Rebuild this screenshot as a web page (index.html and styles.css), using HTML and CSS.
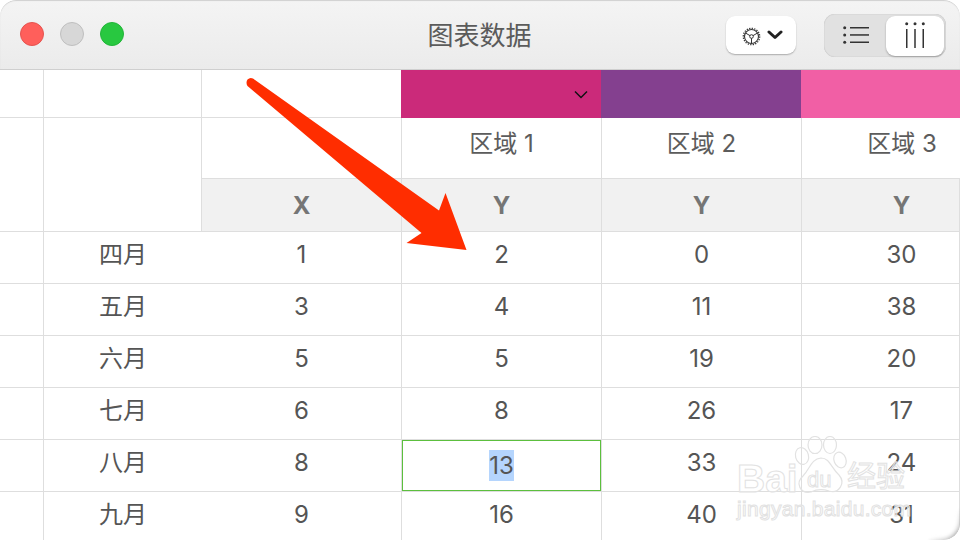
FILE: index.html
```html
<!DOCTYPE html>
<html lang="zh">
<head>
<meta charset="utf-8">
<title>图表数据</title>
<link rel="stylesheet" href="styles.css">
</head>
<body>
<div class="window">
  <header class="titlebar">
    <div class="lights">
      <span class="light red"></span>
      <span class="light grey"></span>
      <span class="light green"></span>
    </div>
    <div class="title">图表数据</div>
    <div class="tools">
      <button class="gear-btn">
        <svg class="gear" width="19" height="19" viewBox="0 0 19 19" fill="none" stroke="#333">
          <circle cx="9.500" cy="9.500" r="7" stroke-width="1.100"/>
          <circle cx="9.500" cy="9.500" r="8.200" stroke-dasharray="1.300 1.270" stroke-width="1.300"/>
          <path d="M9.500 9.500 L3.500 6 M9.500 9.500 L15.500 6 M9.500 9.500 V16.500" stroke-width="1"/>
          <circle cx="9.500" cy="9.500" r="1.800" fill="#fff" stroke-width="1"/>
        </svg>
        <svg width="16" height="10" viewBox="0 0 16 10" fill="none" stroke="#222" stroke-width="3" stroke-linecap="round" stroke-linejoin="round">
          <path d="M2 2 L8 7.500 L14 2"/>
        </svg>
      </button>
      <div class="segment">
        <span class="seg">
          <svg width="26" height="18" viewBox="0 0 26 18" fill="#333">
            <circle cx="1.700" cy="1.700" r="1.500"/><circle cx="1.700" cy="9" r="1.500"/><circle cx="1.700" cy="16.300" r="1.500"/>
            <rect x="7" y="1" width="19" height="1.500"/><rect x="7" y="8.200" width="19" height="1.500"/><rect x="7" y="15.500" width="19" height="1.500"/>
          </svg>
        </span>
        <span class="seg active">
          <svg width="20" height="26" viewBox="0 0 20 26" fill="#333">
            <circle cx="1.700" cy="1.700" r="1.500"/><circle cx="10" cy="1.700" r="1.500"/><circle cx="18.300" cy="1.700" r="1.500"/>
            <rect x="1" y="7" width="1.500" height="19"/><rect x="9.250" y="7" width="1.500" height="19"/><rect x="17.500" y="7" width="1.500" height="19"/>
          </svg>
        </span>
      </div>
    </div>
  </header>
  <div class="sheet">
    <div class="cell"></div>
    <div class="cell"></div>
    <div class="cell"></div>
    <div class="cell swatch magenta">
      <svg class="caret" width="14" height="9" viewBox="0 0 14 9" fill="none" stroke="#111" stroke-width="1.500"><path d="M1 1.500 L7 7.500 L13 1.500"/></svg>
    </div>
    <div class="cell swatch purple"></div>
    <div class="cell swatch pink"></div>

    <div class="cell span2"></div>
    <div class="cell span2"></div>
    <div class="cell head">&nbsp;</div>
    <div class="cell head">区域 1</div>
    <div class="cell head">区域 2</div>
    <div class="cell head shift">区域 3</div>

    <div class="cell axis">X</div>
    <div class="cell axis">Y</div>
    <div class="cell axis">Y</div>
    <div class="cell axis shift">Y</div>

    <div class="cell"></div><div class="cell month">四月</div><div class="cell">1</div><div class="cell">2</div><div class="cell">0</div><div class="cell shift">30</div>
    <div class="cell"></div><div class="cell month">五月</div><div class="cell">3</div><div class="cell">4</div><div class="cell">11</div><div class="cell shift">38</div>
    <div class="cell"></div><div class="cell month">六月</div><div class="cell">5</div><div class="cell">5</div><div class="cell">19</div><div class="cell shift">20</div>
    <div class="cell"></div><div class="cell month">七月</div><div class="cell">6</div><div class="cell">8</div><div class="cell">26</div><div class="cell shift">17</div>
    <div class="cell"></div><div class="cell month">八月</div><div class="cell">8</div><div class="cell selected"><span class="sel-text">13</span></div><div class="cell">33</div><div class="cell shift">24</div>
    <div class="cell"></div><div class="cell month">九月</div><div class="cell">9</div><div class="cell">16</div><div class="cell">40</div><div class="cell shift">31</div>
  </div>

  <svg class="arrow" width="240" height="190" viewBox="240 70 240 190">
    <path d="M247.500 86 Q245.500 82.500 247.500 79.500 Q250 77 253 78.500 L439 210.500 L445.500 193 L466.500 250 L406.500 243 L421.500 233 Z" fill="#ff2d00"/>
  </svg>

  <div class="watermark">
    <svg class="paw" width="54" height="60" viewBox="0 0 54 60" fill="none" stroke="#e2e2e2" stroke-width="1.200">
      <ellipse cx="8" cy="20" rx="6.500" ry="8.500" transform="rotate(-15 8 20)"/>
      <ellipse cx="21" cy="9" rx="7" ry="8.500"/>
      <ellipse cx="36" cy="9" rx="6.500" ry="8.500"/>
      <ellipse cx="46" cy="24" rx="6" ry="8" transform="rotate(-20 46 24)"/>
      <path d="M27 22 C36 22 37 32 45 39 C52 47 45 58 35 55 C29 53 23 53 17 56 C6 58 1 47 9 40 C16 33 17 23 27 22 Z"/>
    </svg>
    <span class="wm-bai">Bai</span>
    <span class="wm-du">du</span>
    <span class="wm-cn">经验</span>
    <span class="wm-url">jingyan.baidu.com</span>
  </div>
  <div class="corner"></div>
</div>
</body>
</html>
```
FILE: styles.css
```css
* { box-sizing: border-box; }
html, body { margin: 0; padding: 0; width: 960px; height: 540px; overflow: hidden; background: #fff; }
body { font-family: Inter, "Noto Sans CJK SC", sans-serif; }

.window {
  position: relative;
  width: 960px;
  height: 540px;
  overflow: hidden;
  background: #fff;
  border-radius: 16px 16px 16px 0;
}

.titlebar {
  height: 70px;
  display: flex;
  align-items: flex-start;
  position: relative;
  background: linear-gradient(#f4f4f4, #ebebeb);
  border-bottom: 1px solid #cfcfcf;
  border-radius: 16px 16px 0 0;
  box-shadow: inset 0 1px 1px #d0d0d0;
}
.lights { display: flex; gap: 16px; padding: 22px 0 0 20px; }
.light { width: 24px; height: 24px; border-radius: 50%; border: 1px solid; }
.red { background: #ff5f5b; border-color: #e5534f; }
.grey { background: #d7d7d7; border-color: #bfbfbf; }
.green { background: #28c840; border-color: #22b539; }

.title {
  position: absolute;
  left: 0; right: 0; top: 18px;
  text-align: center;
  font-size: 26px;
  line-height: 36px;
  color: #5b5b5b;
  padding-right: 1px;
}

.tools { margin-left: auto; display: flex; gap: 28px; padding: 14px 14px 0 0; position: relative; }
.gear-btn {
  width: 70px; height: 38px;
  margin-top: 2px;
  border: 0; border-radius: 9px;
  background: #fff;
  box-shadow: 0 1px 1.500px rgba(0,0,0,.28);
  display: flex; align-items: center; justify-content: center; gap: 6px;
  padding: 0 0 0 3px;
}
.gear { margin-top: 3px; }
.segment {
  width: 122px; height: 43px;
  border-radius: 11px;
  background: #e1e1e1;
  box-shadow: inset 0 0 1px rgba(0,0,0,.3);
  display: flex;
  padding: 2px 2px 1px 0;
}
.seg { flex: 1; display: flex; align-items: center; justify-content: center; }
.seg:first-child { width: 62px; flex: none; padding: 0 0 2px 2px; }
.seg.active { background: #fff; border-radius: 9px; box-shadow: 0 1px 2px rgba(0,0,0,.3); padding-bottom: 2px; }

.sheet {
  display: grid;
  grid-template-columns: 44px 158px 200px 200px 200px 158px;
  grid-template-rows: 48px 61px 53px repeat(6, 52px);
}
.cell {
  display: flex; align-items: center; justify-content: center;
  border-right: 1px solid #dedede;
  border-bottom: 1px solid #dedede;
  font-size: 24px;
  color: #555;
  padding-bottom: 6px;
}
.cell:nth-child(6n) { border-right: 0; }
.span2 { grid-row: span 2; }
.swatch { justify-content: flex-end; padding: 0 14px 0 0; border-right: 0; border-bottom: 0; }
.magenta { background: #cb2a7a; margin-left: -1px; }
.purple { background: #84408f; margin-left: -1px; }
.pink { background: #f15fa5; margin-left: -1px; }
.month { padding-bottom: 10px; }
.head { color: #5c5c5c; padding-bottom: 14px; }
.axis { background: #f1f1f1; font-weight: 700; color: #757575; padding-bottom: 0; }
.shift { padding-left: 42px; }
.selected { box-shadow: inset 0 0 0 1px #5cbf3e; padding: 0; }
.sel-text { background: #b5d5fd; line-height: 31px; padding: 0; }

.arrow { position: absolute; left: 240px; top: 70px; }

.watermark { position: absolute; left: 735px; top: 436px; width: 180px; height: 104px; }
.watermark span { position: absolute; color: rgba(255,255,255,.4); -webkit-text-stroke: 1px #e2e2e2; line-height: 1; }
.paw { position: absolute; left: 59px; top: 0; }
.wm-bai { left: 2px; top: 23px; font-size: 39px; font-weight: 700; font-family: "Liberation Sans", sans-serif; }
.wm-du { left: 72px; top: 33px; font-size: 22px; font-family: "Liberation Sans", sans-serif; }
.wm-cn { left: 112px; top: 24px; font-size: 29px; font-family: "Noto Sans CJK SC", sans-serif; }
.wm-url { left: 2px; top: 62px; font-size: 21px; letter-spacing: .3px; font-family: "Liberation Sans", sans-serif; }

.corner {
  position: absolute; right: 0; bottom: 0;
  width: 34px; height: 34px;
  border-radius: 0 0 16px 0;
  box-shadow: inset -3px -3px 4px -2px #b5b5b5;
  -webkit-mask-image: linear-gradient(135deg, transparent 50%, #000 85%);
  mask-image: linear-gradient(135deg, transparent 50%, #000 85%);
}
```
